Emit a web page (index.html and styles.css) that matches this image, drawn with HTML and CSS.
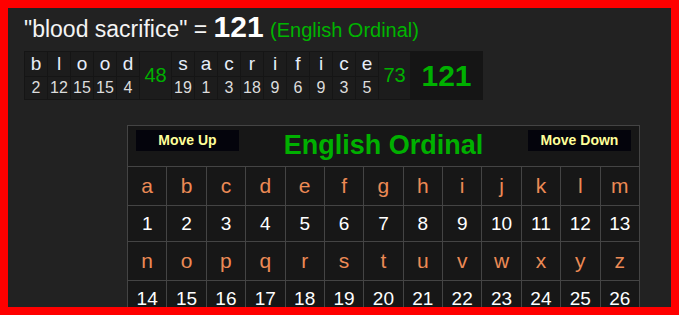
FILE: index.html
```html
<!DOCTYPE html>
<html>
<head>
<meta charset="utf-8">
<link rel="stylesheet" href="styles.css">
</head>
<body>
<div class="frame">
  <div class="title">"blood sacrifice" = <b class="total">121</b> <span class="cipher">(English Ordinal)</span></div>
  <table class="breakdown">
    <tr>
      <td class="l">b</td><td class="l">l</td><td class="l">o</td><td class="l">o</td><td class="l">d</td>
      <td class="sum" rowspan="2">48</td>
      <td class="l">s</td><td class="l">a</td><td class="l">c</td><td class="l">r</td><td class="l">i</td><td class="l">f</td><td class="l">i</td><td class="l">c</td><td class="l">e</td>
      <td class="sum" rowspan="2">73</td>
      <td class="grand" rowspan="2">121</td>
    </tr>
    <tr>
      <td class="n">2</td><td class="n">12</td><td class="n">15</td><td class="n">15</td><td class="n">4</td>
      <td class="n">19</td><td class="n">1</td><td class="n">3</td><td class="n">18</td><td class="n">9</td><td class="n">6</td><td class="n">9</td><td class="n">3</td><td class="n">5</td>
    </tr>
  </table>
  <table class="chart">
    <tr>
      <td class="head" colspan="13">
        <div class="head-row">
          <span class="btn">Move Up</span>
          <span class="chart-title">English Ordinal</span>
          <span class="btn">Move Down</span>
        </div>
      </td>
    </tr>
    <tr class="letters"><td>a</td><td>b</td><td>c</td><td>d</td><td>e</td><td>f</td><td>g</td><td>h</td><td>i</td><td>j</td><td>k</td><td>l</td><td>m</td></tr>
    <tr class="nums"><td>1</td><td>2</td><td>3</td><td>4</td><td>5</td><td>6</td><td>7</td><td>8</td><td>9</td><td>10</td><td>11</td><td>12</td><td>13</td></tr>
    <tr class="letters"><td>n</td><td>o</td><td>p</td><td>q</td><td>r</td><td>s</td><td>t</td><td>u</td><td>v</td><td>w</td><td>x</td><td>y</td><td>z</td></tr>
    <tr class="nums"><td>14</td><td>15</td><td>16</td><td>17</td><td>18</td><td>19</td><td>20</td><td>21</td><td>22</td><td>23</td><td>24</td><td>25</td><td>26</td></tr>
  </table>
</div>
</body>
</html>
```
FILE: styles.css
```css
html, body {
  margin: 0;
  padding: 0;
  background: #ff0000;
}
.frame {
  box-sizing: border-box;
  width: 679px;
  height: 315px;
  border: 8px solid #ff0000;
  background: #222222;
  overflow: hidden;
  padding: 7px 16px 0 16px;
  font-family: "Liberation Sans", Arial, sans-serif;
  color: #f2f2f2;
}
.title {
  font-size: 23px;
  line-height: 24px;
  height: 26px;
  color: #f4f4f4;
  white-space: nowrap;
}
.total {
  font-size: 30px;
  font-weight: bold;
  color: #ffffff;
}
.cipher {
  font-size: 20px;
  color: #00b400;
}
.breakdown {
  margin-top: 10px;
  border-collapse: collapse;
  background: #1c1c1c;
}
.breakdown td {
  padding: 0;
  text-align: center;
  border: 1px solid #151515;
}
.breakdown .l {
  width: 22px;
  height: 24px;
  font-size: 19px;
  color: #e6eefa;
  line-height: 22px;
}
.breakdown .n {
  width: 22px;
  height: 22px;
  font-size: 16px;
  color: #dcdcdc;
  line-height: 20px;
}
.breakdown .sum {
  width: 31px;
  font-size: 20px;
  color: #00b000;
}
.breakdown .grand {
  width: 71px;
  font-size: 30px;
  font-weight: bold;
  color: #00b000;
  background: #151515;
}
.chart {
  margin-top: 25px;
  margin-left: 103px;
  width: 513px;
  border-collapse: collapse;
  background: #171717;
  table-layout: fixed;
}
.chart td {
  border: 1px solid #444444;
  text-align: center;
  padding: 0;
}
.chart td.head {
  height: 40px;
  padding: 0 8px;
  vertical-align: top;
}
.head-row {
  display: flex;
  justify-content: space-between;
  align-items: flex-start;
}
.btn {
  display: block;
  width: 103px;
  height: 21px;
  line-height: 21px;
  margin-top: 4px;
  background: #04040c;
  color: #ffff99;
  font-weight: bold;
  font-size: 14px;
}
.chart-title {
  font-size: 27px;
  line-height: 31px;
  font-weight: bold;
  color: #00b000;
  margin-top: 4px;
}
.letters td {
  height: 38px;
  font-size: 21px;
  color: #ec8a55;
}
.nums td {
  height: 35px;
  font-size: 19px;
  color: #ffffff;
}
```
